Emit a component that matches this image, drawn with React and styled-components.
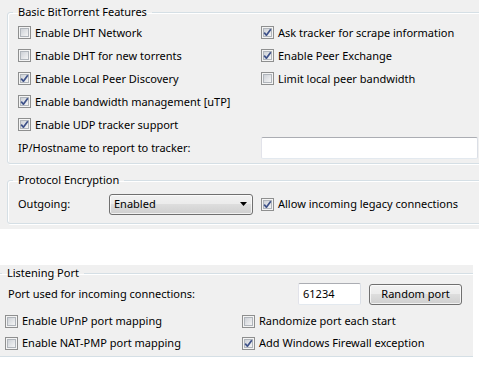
import React from 'react';
import styled, { createGlobalStyle } from 'styled-components';

const Global = createGlobalStyle`
  html, body { margin: 0; padding: 0; background: #ffffff; }
  body {
    font-family: "Noto Sans", "Open Sans", sans-serif;
    font-size: 11px;
    color: #000;
  }
`;

const Page = styled.div`
  display: flex;
  flex-direction: column;
  width: 487px;
  height: 376px;
  overflow: hidden;
`;

const Panel = styled.div`
  background: #f0f0f0;
  width: ${(p) => p.$w}px;
  margin-top: ${(p) => p.$mt || 0}px;
  padding-top: ${(p) => p.$pt || 0}px;
  overflow: hidden;
  display: flex;
  flex-direction: column;
`;

const Group = styled.fieldset`
  margin: ${(p) => p.$mt}px -40px ${(p) => p.$mb}px ${(p) => p.$ml}px;
  padding: ${(p) => p.$pt}px 0 ${(p) => p.$pb}px ${(p) => p.$pl}px;
  border: 1px solid #d5dfe5;
  border-radius: 3px;
  box-shadow: inset 1px 1px 0 #ffffff, 1px 1px 0 #ffffff;
  min-width: 0;
`;

const Legend = styled.legend`
  padding: 0 5px;
  margin-left: ${(p) => p.$ml || -5}px;
  line-height: 14px;
  font-size: 11px;
`;

const Grid = styled.div`
  display: grid;
  grid-template-columns: ${(p) => p.$cols};
  grid-auto-rows: ${(p) => p.$row}px;
  align-items: center;
  margin-top: ${(p) => p.$mt || 0}px;
`;

const Wide = styled.div`
  grid-column: 1 / -1;
  display: grid;
  grid-template-columns: 243px 217px;
  align-items: center;
`;

const CheckRow = styled.label`
  display: flex;
  align-items: center;
  gap: 4px;
  white-space: nowrap;
  line-height: 16px;
`;

const Text = styled.span`
  white-space: nowrap;
  line-height: 16px;
  padding-left: ${(p) => p.$pl || 0}px;
`;

const TextBox = styled.div`
  box-sizing: border-box;
  width: ${(p) => p.$w}px;
  height: 22px;
  background: #ffffff;
  border: 1px solid;
  border-color: #abadb3 #dbdfe6 #e3e9ef #e2e3ea;
  border-radius: 2px;
  padding: 2px 4px;
  line-height: 16px;
`;

const Combo = styled.div`
  box-sizing: border-box;
  width: 144px;
  height: 21px;
  display: flex;
  align-items: center;
  justify-content: space-between;
  padding: 0 5px 0 4px;
  border: 1px solid #707070;
  border-radius: 3px;
  background: linear-gradient(#f2f2f2 0%, #ebebeb 50%, #dddddd 50%, #cfcfcf 100%);
  box-shadow: inset 0 0 0 1px rgba(255, 255, 255, 0.7);
  line-height: 16px;
`;

const Button = styled.div`
  box-sizing: border-box;
  width: 93px;
  height: 21px;
  display: flex;
  align-items: center;
  justify-content: center;
  border: 1px solid #707070;
  border-radius: 3px;
  background: linear-gradient(#f2f2f2 0%, #ebebeb 50%, #dddddd 50%, #cfcfcf 100%);
  box-shadow: inset 0 0 0 1px rgba(255, 255, 255, 0.7);
  line-height: 16px;
`;

const PortRow = styled.div`
  display: grid;
  grid-template-columns: 285px 63px 93px;
  column-gap: 8px;
  align-items: center;
  height: 22px;
`;

function Box({ checked }) {
  return (
    <svg width="13" height="13" viewBox="0 0 13 13" style={{ flex: 'none' }}>
      <defs>
        <linearGradient id="cbg" x1="0" y1="0" x2="1" y2="1">
          <stop offset="0" stopColor="#cbcfd5" />
          <stop offset="1" stopColor="#f7f7f7" />
        </linearGradient>
      </defs>
      <rect x="0.5" y="0.5" width="12" height="12" fill="#f4f4f4" stroke="#8e8f8f" />
      <rect x="2.5" y="2.5" width="8" height="8" fill="url(#cbg)" stroke="#b0b5bb" />
      {checked && (
        <path
          d="M3.2 6.6 L5.4 9.2 L9.8 3.3"
          fill="none"
          stroke="#3d5189"
          strokeWidth="1.7"
          strokeLinejoin="round"
        />
      )}
    </svg>
  );
}

function Check({ checked, children }) {
  return (
    <CheckRow>
      <Box checked={checked} />
      <span>{children}</span>
    </CheckRow>
  );
}

export default function App() {
  return (
    <Page>
      <Global />
      <Panel $w={479}>
        <Group $mt={5} $mb={0} $ml={7} $pt={2} $pb={4} $pl={10}>
          <Legend>Basic BitTorrent Features</Legend>
          <Grid $cols="243px 1fr" $row={23}>
            <Check>Enable DHT Network</Check>
            <Check checked>Ask tracker for scrape information</Check>
            <Check>Enable DHT for new torrents</Check>
            <Check checked>Enable Peer Exchange</Check>
            <Check checked>Enable Local Peer Discovery</Check>
            <Check>Limit local peer bandwidth</Check>
            <Wide>
              <Check checked>Enable bandwidth management [uTP]</Check>
            </Wide>
            <Wide>
              <Check checked>Enable UDP tracker support</Check>
            </Wide>
            <Wide>
              <Text>IP/Hostname to report to tracker:</Text>
              <TextBox $w={217} />
            </Wide>
          </Grid>
        </Group>
        <Group $mt={9} $mb={5} $ml={7} $pt={6} $pb={8} $pl={10}>
          <Legend>Protocol Encryption</Legend>
          <Grid $cols="91px 152px 1fr" $row={22}>
            <Text>Outgoing:</Text>
            <Combo>
              <span>Enabled</span>
              <svg width="7" height="4" viewBox="0 0 7 4">
                <path d="M0 0 H7 L3.5 4 Z" fill="#000" />
              </svg>
            </Combo>
            <Check checked>Allow incoming legacy connections</Check>
          </Grid>
        </Group>
      </Panel>
      <Panel $w={473} $mt={36} $pt={1}>
        <Group $mt={0} $mb={1} $ml={-5} $pt={3} $pb={2} $pl={9}>
          <Legend $ml={-3}>Listening Port</Legend>
          <PortRow>
            <Text $pl={3}>Port used for incoming connections:</Text>
            <TextBox $w={63}>61234</TextBox>
            <Button>Random port</Button>
          </PortRow>
          <Grid $cols="237px 1fr" $row={22} $mt={5}>
            <Check>Enable UPnP port mapping</Check>
            <Check>Randomize port each start</Check>
            <Check>Enable NAT-PMP port mapping</Check>
            <Check checked>Add Windows Firewall exception</Check>
          </Grid>
        </Group>
      </Panel>
    </Page>
  );
}
